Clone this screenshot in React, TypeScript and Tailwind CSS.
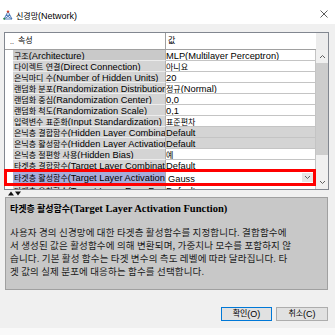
import React from "react";

type Row = { name: string; value: string; dim?: boolean; selected?: boolean; focus?: boolean };

const rows: Row[] = [
  { name: "구조(Architecture)", value: "MLP(Multilayer Perceptron)", focus: true },
  { name: "다이렉트 연결(Direct Connection)", value: "아니요" },
  { name: "은닉마디 수(Number of Hidden Units)", value: "20" },
  { name: "랜덤화 분포(Randomization Distribution)", value: "정규(Normal)" },
  { name: "랜덤화 중심(Randomization Center)", value: "0,0" },
  { name: "랜덤화 척도(Randomization Scale)", value: "0,1" },
  { name: "입력변수 표준화(Input Standardization)", value: "표준편차" },
  { name: "은닉층 결합함수(Hidden Layer Combination Function)", value: "Default", dim: true },
  { name: "은닉층 활성함수(Hidden Layer Activation Function)", value: "Default", dim: true },
  { name: "은닉층 절편항 사용(Hidden Bias)", value: "예" },
  { name: "타겟층 결합함수(Target Layer Combination Function)", value: "Default" },
  { name: "타겟층 활성함수(Target Layer Activation Function)", value: "Gauss", selected: true },
  { name: "타겟층 오차함수(Target Layer Error Function)", value: "Default" },
];

// korean runs get a smaller size than latin, like the original dialog font
function Txt({ s, ko = "text-[8px]", en = "text-[9.3px]" }: { s: string; ko?: string; en?: string }) {
  const parts = s.split(/([가-힣][가-힣 ]*)/).filter(Boolean);
  return (
    <>
      {parts.map((p, i) => (
        <span key={i} className={/[가-힣]/.test(p) ? ko : en}>
          {p}
        </span>
      ))}
    </>
  );
}

function Chevron({ up }: { up?: boolean }) {
  return (
    <svg width="7" height="5" viewBox="0 0 7 5">
      <path d={up ? "M1 4 L3.5 1.5 L6 4" : "M1 1 L3.5 3.5 L6 1"} stroke="#606060" strokeWidth="1" fill="none" />
    </svg>
  );
}

function TitleBar() {
  return (
    <div className="h-[24px] shrink-0 bg-white flex items-center pt-[6px] pl-[3px] pr-[7px]">
      <svg width="10" height="10" viewBox="0 0 10 10">
        <path d="M1 9 L5 1.5 L9 9 M1 9 L9 9 M3 5.2 L7 5.2 M1 9 L7 5.2 M9 9 L3 5.2" stroke="#3f6fb2" strokeWidth="0.9" fill="none" />
        <circle cx="5" cy="1.6" r="1.2" fill="#d0452e" />
        <circle cx="1.2" cy="8.8" r="1" fill="#2f8f4a" />
      </svg>
      <span className="ml-[3px] leading-[10px] whitespace-nowrap">
        <Txt s="신경망(Network)" en="text-[9px]" />
      </span>
      <div className="flex-1" />
      <svg width="8" height="8" viewBox="0 0 8 8" className="-mt-[2px]">
        <path d="M0.5 0.5 L7.5 7.5 M7.5 0.5 L0.5 7.5" stroke="#333" strokeWidth="0.8" />
      </svg>
    </div>
  );
}

function TableRow({ row }: { row: Row }) {
  const h = row.selected ? "h-[14px]" : "h-[11px]";
  let bg = "bg-[#d4d4d4]";
  if (row.selected) bg = "bg-[#a7addb]";
  else if (row.focus) bg = "bg-[#c9c9c9]";
  return (
    <div className={`flex shrink-0 ${h}`}>
      <div className="w-[8px] bg-white" />
      <div
        className={`w-[153px] min-w-0 flex items-center pl-[1px] overflow-hidden whitespace-nowrap border-r border-b border-r-[#b0b0b0] border-b-[#ececec] ${bg}`}
      >
        <span className="leading-[10px]">
          <Txt s={row.name} />
        </span>
      </div>
      <div
        className={`flex-1 min-w-0 flex items-center overflow-hidden whitespace-nowrap border-r border-b border-[#c4c4c4] ${
          row.dim ? "bg-[#d4d4d4]" : "bg-white"
        } ${row.selected ? "pl-[2px]" : "pl-[0px]"}`}
      >
        <span className="leading-[10px] flex-1">
          <Txt s={row.value} />
        </span>
        {row.selected && (
          <div className="w-[11px] h-[9px] mr-[2px] bg-[#e6e6e6] flex items-center justify-center">
            <Chevron />
          </div>
        )}
      </div>
    </div>
  );
}

function PropertyTable() {
  return (
    <div className="ml-[4px] mr-[6px] mt-[8px] h-[158px] shrink-0 border border-[#828790] bg-white flex relative">
      <div className="flex-1 flex flex-col overflow-hidden">
        <div className="h-[17px] shrink-0 flex border-b border-[#a0a0a0] bg-white">
          <div className="w-[8px] pl-[5px] flex items-center whitespace-nowrap text-[7px] leading-none">..</div>
          <div className="w-[153px] pl-[5px] flex items-center border-r border-[#a0a0a0] leading-[10px]">
            <Txt s="속성" />
          </div>
          <div className="flex-1 pl-[2px] flex items-center leading-[10px]">
            <Txt s="값" />
          </div>
        </div>
        {rows.map((r) => (
          <TableRow key={r.name} row={r} />
        ))}
      </div>
      <div className="w-[12px] flex flex-col bg-[#f0f0f0]">
        <div className="h-[17px] shrink-0 bg-[#ececec]" />
        <div className="h-[13px] shrink-0 flex items-center justify-center">
          <Chevron up />
        </div>
        <div className="h-[92px] shrink-0 bg-[#cdcdcd]" />
        <div className="flex-1" />
        <div className="h-[13px] shrink-0 flex items-center justify-center">
          <Chevron />
        </div>
      </div>
      <div className="absolute -left-[1px] top-[136px] w-[312px] h-[17px] border-[3px] border-[#ff0000]" />
    </div>
  );
}

function Splitter() {
  return (
    <div className="h-[7px] shrink-0 pl-[8px] flex items-center">
      <svg width="13" height="5" viewBox="0 0 13 5">
        <path d="M0 4.5 L3 0.5 L6 4.5 Z" fill="#111" />
        <path d="M7 0.5 L13 0.5 L10 4.5 Z" fill="#111" />
      </svg>
    </div>
  );
}

const lines = [
  "사용자 경의 신경망에 대한 타겟층 활성함수를 지정합니다. 결합함수에",
  "서 생성된 값은 활성함수에 의해 변환되며, 가중치나 모수를 포함하지 않",
  "습니다. 기본 활성 함수는 타겟 변수의 측도 레벨에 따라 달라집니다. 타",
  "겟 값의 실제 분포에 대응하는 함수를 선택합니다.",
];

function Description() {
  return (
    <div className="ml-[5px] mr-[7px] h-[93px] shrink-0 bg-[#c8c8c8] border border-[#a0a0a0] px-[4px] pt-[4px] overflow-hidden">
      <div className="h-[11px] leading-[11px] whitespace-nowrap font-bold flex items-center">
        <span>
          <Txt
            s="타겟층 활성함수(Target Layer Activation Function)"
            ko="text-[9px] font-['Noto_Sans_CJK_KR',sans-serif]"
            en="text-[10.5px] font-['Liberation_Serif',serif]"
          />
        </span>
      </div>
      <div className="mt-[13px] text-[9.5px] tracking-[0.15px] leading-[13px] font-['Noto_Sans_CJK_KR',sans-serif] text-[#1a1a1a]">
        {lines.map((l) => (
          <div key={l} className="whitespace-nowrap h-[13px]">
            {l}
          </div>
        ))}
      </div>
    </div>
  );
}

function Buttons() {
  return (
    <div className="mt-[17px] flex justify-end gap-[4px] pr-[7px]">
      <button className="w-[51px] h-[14px] bg-[#e1e1e1] border border-[#0078d7] flex items-center justify-center leading-[10px]">
        <Txt s="확인(O)" en="text-[9px]" />
      </button>
      <button className="w-[52px] h-[14px] bg-[#e1e1e1] border border-[#adadad] flex items-center justify-center leading-[10px]">
        <Txt s="취소(C)" en="text-[9px]" />
      </button>
    </div>
  );
}

export default function App() {
  return (
    <div className="w-[335px] h-[335px] bg-[#f9f9f9] font-['Liberation_Sans','Noto_Sans_CJK_KR',sans-serif] text-black overflow-hidden">
      <div className="h-[328px] bg-[#f0f0f0] flex flex-col">
        <TitleBar />
        <PropertyTable />
        <Splitter />
        <Description />
        <Buttons />
      </div>
    </div>
  );
}
